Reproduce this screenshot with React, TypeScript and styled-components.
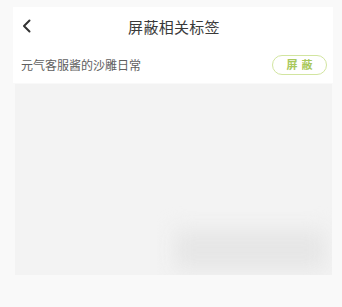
import React from 'react';
import styled, { createGlobalStyle } from 'styled-components';

const GlobalStyle = createGlobalStyle`
  html, body {
    margin: 0;
    padding: 0;
    background: #f9f9f9;
    font-family: "Noto Sans CJK SC", "Liberation Sans", sans-serif;
  }
`;

const Page = styled.div`
  width: 342px;
  height: 307px;
  padding: 7px 9px 0 13px;
  box-sizing: border-box;
  background: #f9f9f9;
`;

const Card = styled.div`
  background: #ffffff;
  display: flex;
  flex-direction: column;
`;

const Header = styled.div`
  height: 39px;
  display: flex;
  align-items: center;
  justify-content: center;
  position: relative;
`;

const BackButton = styled.div`
  position: absolute;
  left: 8px;
  top: 12px;
  width: 12px;
  height: 14px;
  display: flex;
`;

const Title = styled.div`
  font-size: 15px;
  line-height: 18px;
  color: #3a3a3a;
  letter-spacing: 0.3px;
  margin-left: 2px;
`;

const TagRow = styled.div`
  height: 37px;
  display: flex;
  align-items: center;
  justify-content: space-between;
  padding: 0 6px 0 8px;
`;

const TagName = styled.span`
  font-size: 12px;
  line-height: 14px;
  color: #606060;
`;

const BlockButton = styled.div`
  width: 55px;
  height: 20px;
  border: 1.5px solid #d2e5a0;
  border-radius: 11px;
  box-sizing: border-box;
  display: flex;
  align-items: center;
  justify-content: center;
  font-size: 11px;
  line-height: 13px;
  font-weight: 600;
  color: #a8c85c;
  letter-spacing: 4px;
  padding-left: 4px;
`;

const Content = styled.div`
  position: relative;
  height: 191px;
  margin: 1px 1px 0 2px;
  background: #f3f3f3;
  overflow: hidden;
`;

const Shadow = styled.div`
  position: absolute;
  left: 160px;
  top: 146px;
  width: 150px;
  height: 40px;
  background: #e6e6e6;
  filter: blur(10px);
`;

export default function App() {
  return (
    <>
      <GlobalStyle />
      <Page>
        <Card>
          <Header>
            <BackButton>
              <svg width="12" height="14" viewBox="0 0 12 14">
                <path d="M8.5 1.5 L3 7 L8.5 12.5" fill="none" stroke="#333" strokeWidth="2" strokeLinecap="round" strokeLinejoin="round" />
              </svg>
            </BackButton>
            <Title>屏蔽相关标签</Title>
          </Header>
          <TagRow>
            <TagName>元气客服酱的沙雕日常</TagName>
            <BlockButton>屏蔽</BlockButton>
          </TagRow>
        </Card>
        <Content>
          <Shadow />
        </Content>
      </Page>
    </>
  );
}
